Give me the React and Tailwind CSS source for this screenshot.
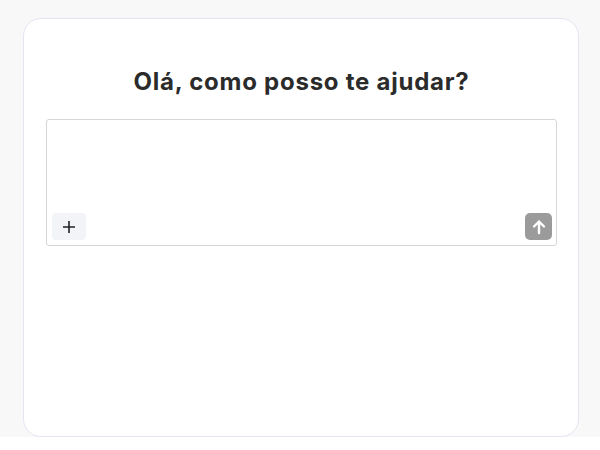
import React from "react";

export default function App() {
  return (
    <div className="w-[600px] h-[450px] bg-white" style={{ fontFamily: "Inter, 'Noto Sans', sans-serif" }}>
      <div className="bg-[#f8f8f9] pt-[18px] pl-[23px] pr-[21px] h-[437px]">
        <div className="h-[419px] bg-white border border-[#e3e6f1] rounded-[18px] pl-[22px] pr-[21px] pt-[49px]">
          <h1 className="text-center text-[24px] leading-[28px] font-bold tracking-[0.75px] text-[#2b2b2b]">
            Olá, como posso te ajudar?
          </h1>
          <div className="mt-[23px] h-[127px] border border-[#d6d6d6] rounded-[3px] flex flex-col justify-end pl-[5px] pr-[4px] pb-[5px]">
            <div className="flex items-center justify-between">
              <button className="w-[34px] h-[27px] bg-[#f2f4f8] rounded-[4px] flex items-center justify-center text-[#222]">
                <svg width="14" height="14" viewBox="0 0 14 14" fill="none" stroke="currentColor" strokeWidth="1.6">
                  <path d="M7 1v12M1 7h12" />
                </svg>
              </button>
              <button className="w-[27px] h-[27px] bg-[#9b9b9b] rounded-[5px] flex items-center justify-center text-white">
                <svg width="16" height="16" viewBox="0 0 16 16" fill="none" stroke="currentColor" strokeWidth="2.4" strokeLinecap="round" strokeLinejoin="round">
                  <path d="M8 14V2.5M3 7.5l5-5 5 5" />
                </svg>
              </button>
            </div>
          </div>
        </div>
      </div>
    </div>
  );
}
